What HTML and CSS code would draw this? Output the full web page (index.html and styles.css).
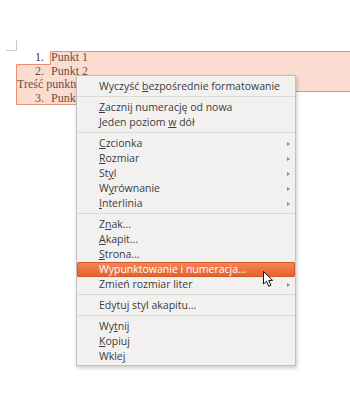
FILE: index.html
```html
<!DOCTYPE html>
<html lang="pl">
<head>
  <meta charset="UTF-8">
  <title>Menu kontekstowe</title>
  <link rel="stylesheet" href="styles.css">
</head>
<body>

  <div class="doc">
    <div class="corner"></div>
    <div class="line"><span class="num">1.</span><span>Punkt 1</span></div>
    <div class="line"><span class="num">2.</span><span>Punkt 2</span></div>
    <div class="line">Treść punktu 2</div>
    <div class="line"><span class="num">3.</span><span>Punkt 3</span></div>
  </div>

  <!-- text selection drawn over the document -->
  <svg class="selection" width="350" height="120" viewBox="0 0 350 120">
    <path d="M50.5 51.5 H352 V91.5 H200 V104.5 H16.5 V64.5 H50.5 Z" fill="rgba(238,138,98,0.3)" stroke="#ec9170" stroke-width="1"/>
  </svg>

  <div class="menu">
    <div class="item"><span>Wyczyść <u>b</u>ezpośrednie formatowanie</span></div>
    <div class="sep"></div>
    <div class="item"><span><u>Z</u>acznij numerację od nowa</span></div>
    <div class="item"><span>Jeden poziom <u>w</u> dół</span></div>
    <div class="sep"></div>
    <div class="item"><span><u>C</u>zcionka</span><i class="arrow"></i></div>
    <div class="item"><span><u>R</u>ozmiar</span><i class="arrow"></i></div>
    <div class="item"><span>St<u>y</u>l</span><i class="arrow"></i></div>
    <div class="item"><span>W<u>y</u>równanie</span><i class="arrow"></i></div>
    <div class="item"><span><u>I</u>nterlinia</span><i class="arrow"></i></div>
    <div class="sep"></div>
    <div class="item"><span>Z<u>n</u>ak...</span></div>
    <div class="item"><span><u>A</u>kapit...</span></div>
    <div class="item"><span><u>S</u>trona...</span></div>
    <div class="item active"><span>Wypunktowanie i numeracja...</span></div>
    <div class="item"><span>Zmień rozmiar liter</span><i class="arrow"></i></div>
    <div class="sep"></div>
    <div class="item"><span>Edytuj styl akapitu...</span></div>
    <div class="sep"></div>
    <div class="item"><span>Wy<u>t</u>nij</span></div>
    <div class="item"><span><u>K</u>opiuj</span></div>
    <div class="item"><span>Wkle<u>j</u></span></div>
  </div>

  <svg class="cursor" width="12" height="17" viewBox="0 0 12 17">
    <path d="M0.5 0.5 L0.5 13 L3.5 10.2 L5.8 15.3 L7.9 14.3 L5.7 9.4 L9.6 9.4 Z" fill="#fff" stroke="#111" stroke-width="1" stroke-linejoin="round"/>
  </svg>

</body>
</html>
```

FILE: styles.css
```css
body {
  margin: 0;
  padding: 0;
  background-color: #fff;
  width: 350px;
  height: 396px;
  overflow: hidden;
  position: relative;
}

.doc {
  padding-top: 40px;
  font-family: "Liberation Serif", serif;
  font-size: 12px;
  color: #333;
}

.corner {
  width: 10px;
  height: 10px;
  margin-left: 6px;
  border-right: 1px solid #c9c9c9;
  border-bottom: 1px solid #c9c9c9;
}

.line {
  display: flex;
  height: 13.5px;
  line-height: 13.5px;
  padding-left: 17px;
  white-space: nowrap;
}

.num {
  width: 27px;
  margin-right: 7px;
  text-align: right;
}

.selection {
  position: absolute;
  left: 0;
  top: 0;
}

.menu {
  position: absolute;
  left: 76px;
  top: 75px;
  width: 218px;
  padding: 3px 0 1px;
  background-color: #f2f1f0;
  border: 1px solid #c5c2bd;
  box-shadow: 1px 2px 4px rgba(0, 0, 0, 0.22);
  font-family: "Open Sans", sans-serif;
  font-size: 10.5px;
  color: #3c3c3c;
}

.item {
  display: flex;
  justify-content: space-between;
  align-items: center;
  height: 15px;
  line-height: 15px;
  padding: 0 5px 0 22px;
  white-space: nowrap;
}

.item u {
  text-underline-offset: 1px;
}

.item.active {
  color: #fff;
  background: linear-gradient(#f5865a, #e3602b);
  box-shadow: inset 0 0 0 1px #d05a28;
  border-radius: 2px;
}

.arrow {
  width: 0;
  height: 0;
  border-left: 3px solid #8c8c8c;
  border-top: 2.5px solid transparent;
  border-bottom: 2.5px solid transparent;
}

.sep {
  height: 1px;
  margin: 2px 0 3px;
  background-color: #dcdad5;
}

.cursor {
  position: absolute;
  left: 263px;
  top: 271px;
}
```
